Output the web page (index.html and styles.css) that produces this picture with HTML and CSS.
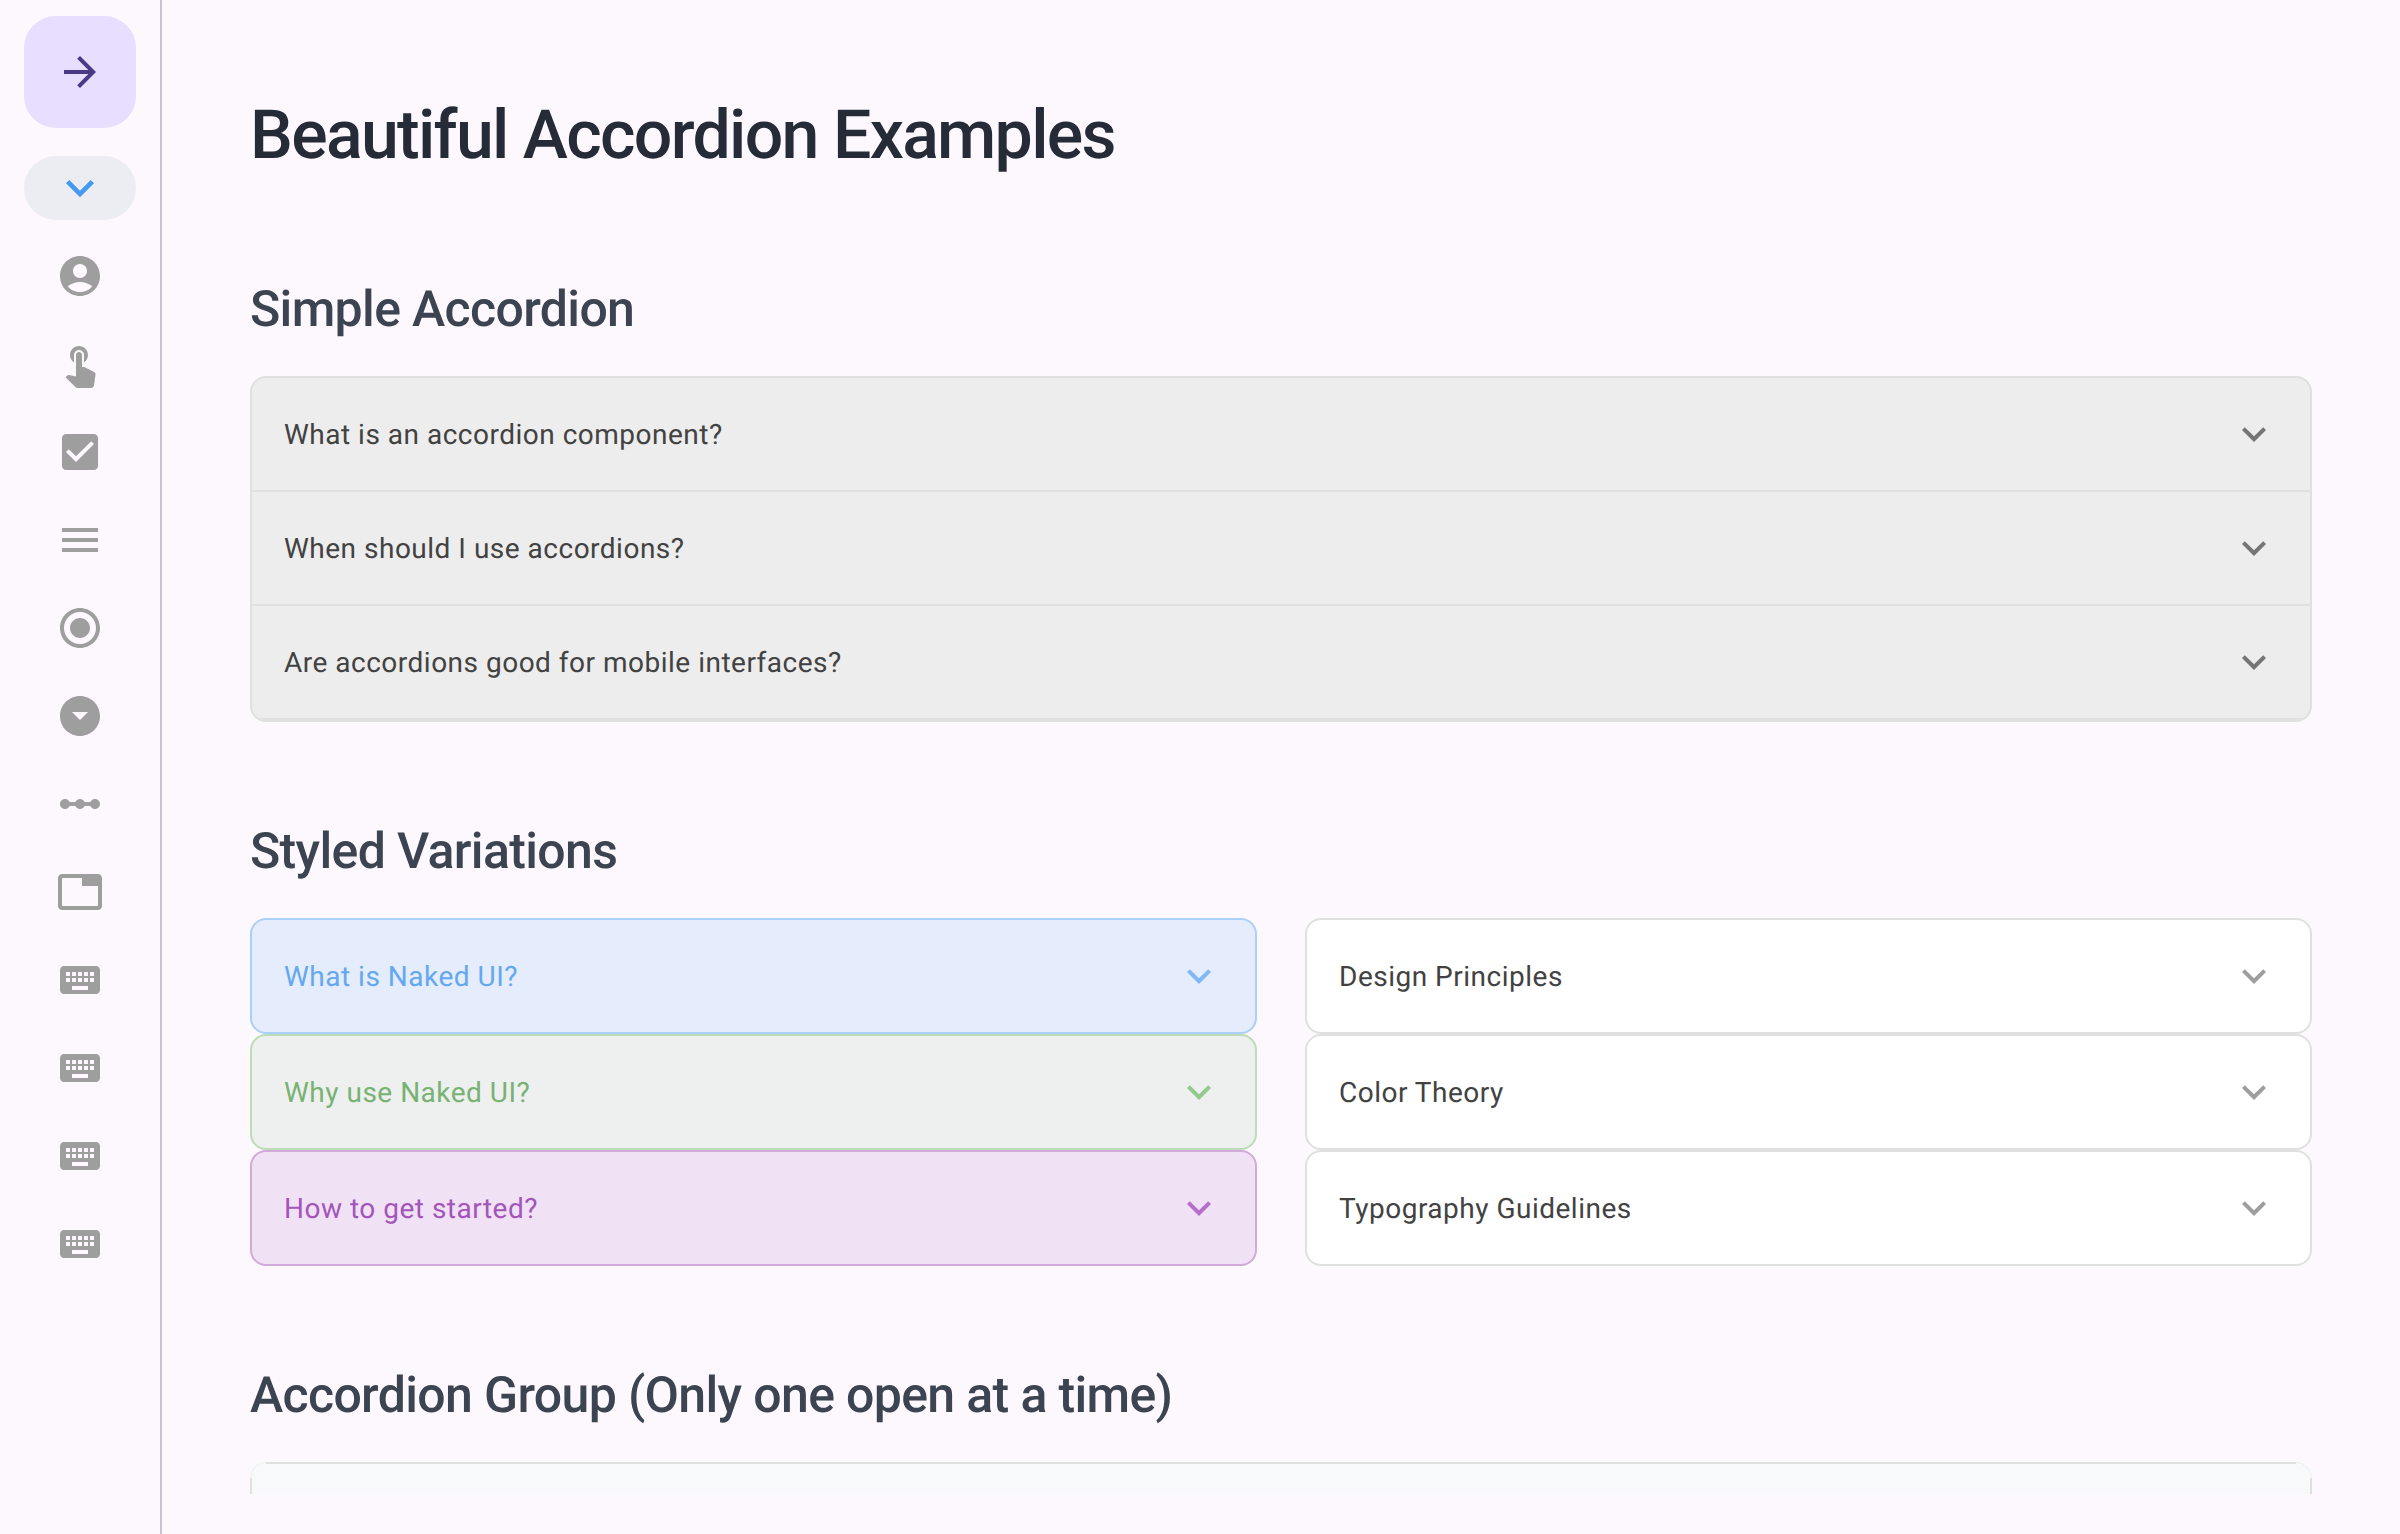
FILE: index.html
```html
<!DOCTYPE html>
<html lang="en">
<head>
    <meta charset="UTF-8">
    <meta name="viewport" content="width=device-width, initial-scale=1.0">
    <title>Beautiful Accordion Examples</title>
    <link rel="stylesheet" href="styles.css">
</head>
<body>
    <!-- Material icon sprite -->
    <svg class="sprite" xmlns="http://www.w3.org/2000/svg">
        <symbol id="i-arrow" viewBox="0 0 24 24"><path d="M12 4l-1.41 1.41L16.17 11H4v2h12.17l-5.58 5.59L12 20l8-8z"/></symbol>
        <symbol id="i-chevron" viewBox="0 0 24 24"><path d="M16.59 8.59L12 13.17 7.41 8.59 6 10l6 6 6-6z"/></symbol>
        <symbol id="i-account" viewBox="0 0 24 24"><path d="M12 2C6.48 2 2 6.48 2 12s4.48 10 10 10 10-4.48 10-10S17.52 2 12 2zm0 4c1.93 0 3.5 1.57 3.5 3.5S13.93 13 12 13s-3.5-1.57-3.5-3.5S10.07 6 12 6zm0 14c-2.03 0-4.43-.82-6.14-2.88C7.55 15.8 9.68 15 12 15s4.45.8 6.14 2.12C16.43 19.18 14.03 20 12 20z"/></symbol>
        <symbol id="i-touch" viewBox="0 0 24 24"><path d="M9 11.24V7.5C9 6.12 10.12 5 11.5 5S14 6.12 14 7.5v3.74c1.21-.81 2-2.18 2-3.74C16 5.01 13.99 3 11.5 3S7 5.01 7 7.5c0 1.56.79 2.93 2 3.74zm9.84 4.63l-4.54-2.26c-.17-.07-.35-.11-.54-.11H13v-6c0-.83-.67-1.5-1.5-1.5S10 6.67 10 7.5v10.74l-3.43-.72c-.08-.01-.15-.03-.24-.03-.31 0-.59.13-.79.33l-.79.8 4.94 4.94c.27.27.65.44 1.06.44h6.79c.75 0 1.33-.55 1.44-1.28l.75-5.27c.01-.07.02-.14.02-.2 0-.62-.38-1.16-.91-1.38z"/></symbol>
        <symbol id="i-check" viewBox="0 0 24 24"><path d="M19 3H5c-1.11 0-2 .9-2 2v14c0 1.1.89 2 2 2h14c1.11 0 2-.9 2-2V5c0-1.1-.89-2-2-2zm-9 14l-5-5 1.41-1.41L10 14.17l7.59-7.59L19 8l-9 9z"/></symbol>
        <symbol id="i-menu" viewBox="0 0 24 24"><path d="M3 18h18v-2H3v2zm0-5h18v-2H3v2zm0-7v2h18V6H3z"/></symbol>
        <symbol id="i-radio" viewBox="0 0 24 24"><path d="M12 7c-2.76 0-5 2.24-5 5s2.24 5 5 5 5-2.24 5-5-2.24-5-5-5zm0-5C6.48 2 2 6.48 2 12s4.48 10 10 10 10-4.48 10-10S17.52 2 12 2zm0 18c-4.42 0-8-3.58-8-8s3.58-8 8-8 8 3.58 8 8-3.58 8-8 8z"/></symbol>
        <symbol id="i-dropdown" viewBox="0 0 24 24"><path d="M12 2C6.48 2 2 6.48 2 12s4.48 10 10 10 10-4.48 10-10S17.52 2 12 2zm0 12l-4-4h8l-4 4z"/></symbol>
        <symbol id="i-scale" viewBox="0 0 24 24"><path d="M19.5 9.5c-1.03 0-1.9.62-2.29 1.5h-2.92c-.39-.88-1.26-1.5-2.29-1.5s-1.9.62-2.29 1.5H6.79c-.39-.88-1.26-1.5-2.29-1.5C3.12 9.5 2 10.62 2 12s1.12 2.5 2.5 2.5c1.03 0 1.9-.62 2.29-1.5h2.92c.39.88 1.26 1.5 2.29 1.5s1.9-.62 2.29-1.5h2.92c.39.88 1.26 1.5 2.29 1.5 1.38 0 2.5-1.12 2.5-2.5s-1.12-2.5-2.5-2.5z"/></symbol>
        <symbol id="i-tab" viewBox="0 0 24 24"><path d="M21 3H3c-1.1 0-2 .9-2 2v14c0 1.1.9 2 2 2h18c1.1 0 2-.9 2-2V5c0-1.1-.9-2-2-2zm0 16H3V5h10v4h8v10z"/></symbol>
        <symbol id="i-keyboard" viewBox="0 0 24 24"><path d="M20 5H4c-1.1 0-1.99.9-1.99 2L2 17c0 1.1.9 2 2 2h16c1.1 0 2-.9 2-2V7c0-1.1-.9-2-2-2zm-9 3h2v2h-2V8zm0 3h2v2h-2v-2zM8 8h2v2H8V8zm0 3h2v2H8v-2zm-1 2H5v-2h2v2zm0-3H5V8h2v2zm9 7H8v-2h8v2zm0-4h-2v-2h2v2zm0-3h-2V8h2v2zm3 3h-2v-2h2v2zm0-3h-2V8h2v2z"/></symbol>
    </svg>

    <div class="app">
        <nav class="rail">
            <button class="rail-toggle"><svg class="icon"><use href="#i-arrow"/></svg></button>
            <button class="rail-active"><svg class="icon-lg"><use href="#i-chevron"/></svg></button>
            <div class="rail-list">
                <a class="rail-item"><svg class="icon"><use href="#i-account"/></svg></a>
                <a class="rail-item"><svg class="icon"><use href="#i-touch"/></svg></a>
                <a class="rail-item"><svg class="icon"><use href="#i-check"/></svg></a>
                <a class="rail-item"><svg class="icon"><use href="#i-menu"/></svg></a>
                <a class="rail-item"><svg class="icon"><use href="#i-radio"/></svg></a>
                <a class="rail-item"><svg class="icon"><use href="#i-dropdown"/></svg></a>
                <a class="rail-item"><svg class="icon"><use href="#i-scale"/></svg></a>
                <a class="rail-item"><svg class="icon"><use href="#i-tab"/></svg></a>
                <a class="rail-item"><svg class="icon"><use href="#i-keyboard"/></svg></a>
                <a class="rail-item"><svg class="icon"><use href="#i-keyboard"/></svg></a>
                <a class="rail-item"><svg class="icon"><use href="#i-keyboard"/></svg></a>
                <a class="rail-item"><svg class="icon"><use href="#i-keyboard"/></svg></a>
            </div>
        </nav>

        <main class="main">
            <div class="scroll">
                <h1>Beautiful Accordion Examples</h1>

                <h2>Simple Accordion</h2>
                <div class="simple">
                    <div class="row simple-row"><span>What is an accordion component?</span><svg class="icon"><use href="#i-chevron"/></svg></div>
                    <div class="row simple-row"><span>When should I use accordions?</span><svg class="icon"><use href="#i-chevron"/></svg></div>
                    <div class="row simple-row"><span>Are accordions good for mobile interfaces?</span><svg class="icon"><use href="#i-chevron"/></svg></div>
                </div>

                <h2>Styled Variations</h2>
                <div class="columns">
                    <div>
                        <div class="row card blue"><span>What is Naked UI?</span><svg class="icon"><use href="#i-chevron"/></svg></div>
                        <div class="row card green"><span>Why use Naked UI?</span><svg class="icon"><use href="#i-chevron"/></svg></div>
                        <div class="row card purple"><span>How to get started?</span><svg class="icon"><use href="#i-chevron"/></svg></div>
                    </div>
                    <div>
                        <div class="row card plain"><span>Design Principles</span><svg class="icon"><use href="#i-chevron"/></svg></div>
                        <div class="row card plain"><span>Color Theory</span><svg class="icon"><use href="#i-chevron"/></svg></div>
                        <div class="row card plain"><span>Typography Guidelines</span><svg class="icon"><use href="#i-chevron"/></svg></div>
                    </div>
                </div>

                <h2>Accordion Group (Only one open at a time)</h2>
                <div class="group"></div>
            </div>
        </main>
    </div>
</body>
</html>
```

FILE: styles.css
```css
* {
    box-sizing: border-box;
}
body {
    margin: 0;
    font-family: Roboto, "Liberation Sans", sans-serif;
    text-rendering: geometricPrecision;
    background-color: #fdf8fe;
}
.sprite {
    display: none;
}
.app {
    display: flex;
    height: 1534px;
    overflow: hidden;
}
.icon {
    display: block;
    width: 48px;
    height: 48px;
    fill: currentColor;
}
.icon-lg {
    display: block;
    width: 56px;
    height: 56px;
    fill: currentColor;
}

/* left rail */
.rail {
    flex: none;
    width: 162px;
    padding: 16px 24px 0;
    border-right: 2px solid #c9c4d0;
    display: flex;
    flex-direction: column;
}
.rail button {
    display: flex;
    align-items: center;
    justify-content: center;
    width: 112px;
    padding: 0;
    border: none;
}
.rail-toggle {
    height: 112px;
    border-radius: 32px;
    background-color: #e8deff;
    color: #4a3a86;
}
.rail-active {
    height: 64px;
    margin-top: 28px;
    border-radius: 32px;
    background-color: #ecedf2;
    color: #4499f0;
}
.rail-list {
    margin-top: 12px;
    color: #9e9e9e;
}
.rail-item {
    display: flex;
    align-items: center;
    justify-content: center;
    height: 88px;
}

/* content */
.main {
    flex: 1;
    min-width: 0;
    padding: 40px 88px;
}
.scroll {
    height: 100%;
    overflow: hidden;
    padding-top: 57px;
}
h1 {
    margin: 0 0 109px;
    font-size: 68px;
    line-height: 76px;
    font-weight: 500;
    letter-spacing: -1.7px;
    color: #252b37;
}
h2 {
    margin: 102px 0 38px;
    font-size: 50px;
    line-height: 56px;
    font-weight: 500;
    letter-spacing: -0.65px;
    color: #3c4452;
}
h1 + h2 {
    margin-top: 0;
}

/* accordion rows */
.row {
    display: flex;
    align-items: center;
    justify-content: space-between;
    padding: 0 32px;
    font-size: 28px;
    letter-spacing: 0.5px;
}
.row svg {
    flex: none;
}
.simple {
    border: 2px solid #e0e0e0;
    border-radius: 16px;
    background-color: #ededed;
    overflow: hidden;
}
.simple-row {
    height: 114px;
    border-bottom: 2px solid #e0e0e0;
    color: #424242;
}
.simple-row svg {
    color: #757575;
}
.columns {
    display: grid;
    grid-template-columns: 1fr 1fr;
    column-gap: 48px;
}
.card {
    height: 116px;
    border: 2px solid;
    border-radius: 16px;
}
.blue {
    background-color: #e5ecfb;
    border-color: #abd0f7;
    color: #64a8f0;
}
.blue svg {
    color: #80b9f6;
}
.green {
    background-color: #edf0ee;
    border-color: #bcdcb7;
    color: #78b274;
}
.green svg {
    color: #93c98f;
}
.purple {
    background-color: #f0e2f4;
    border-color: #d1aadb;
    color: #a455bb;
}
.purple svg {
    color: #b571c9;
}
.plain {
    background-color: #ffffff;
    border-color: #e0e0e0;
    color: #424242;
}
.plain svg {
    color: #9e9e9e;
}

/* top edge only, the corners stay faint and the rest is clipped */
.group {
    height: 120px;
    border-radius: 16px;
    background:
        linear-gradient(#e0e0e0, #e0e0e0) center top / calc(100% - 32px) 2px no-repeat,
        linear-gradient(#e0e0e0, #e0e0e0) left 16px / 2px 100% no-repeat,
        linear-gradient(#e0e0e0, #e0e0e0) right 16px / 2px 100% no-repeat,
        #f8f9fa;
    box-shadow: inset 0 0 0 1px rgba(224, 224, 224, 0.4);
}
```
